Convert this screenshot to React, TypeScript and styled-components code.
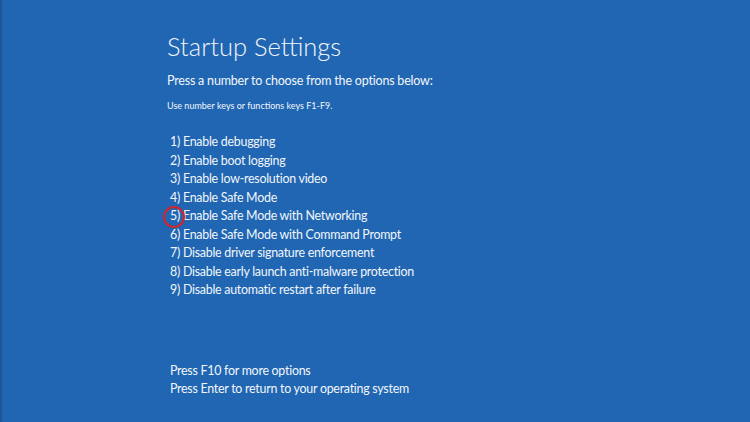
import React from 'react'
import styled, { createGlobalStyle } from 'styled-components'

const GlobalStyle = createGlobalStyle`
  html, body {
    margin: 0;
    padding: 0;
    background: #2166b2;
  }
`

const Screen = styled.div`
  width: 750px;
  height: 422px;
  box-sizing: border-box;
  background: #2166b2;
  border-left: 2px solid #1b5698;
  color: #f2f6fb;
  font-family: Lato, 'Open Sans', sans-serif;
  display: flex;
  flex-direction: column;
  padding: 30px 0 24px 165px;
  overflow: hidden;
`
const Title = styled.h1`
  margin: 0;
  font-size: 25.5px;
  font-weight: 300;
  line-height: 32px;
`
const Lead = styled.p`
  margin: 10px 0 0;
  font-size: 12.5px;
  letter-spacing: -0.2px;
  line-height: 18px;
`
const Hint = styled.p`
  margin: 10px 0 0;
  font-size: 9px;
  line-height: 12px;
`
const Options = styled.ol`
  list-style: none;
  margin: 21px 0 0;
  padding: 0 0 0 3px;
`
const Option = styled.li`
  position: relative;
  font-size: 12.4px;
  letter-spacing: -0.25px;
  line-height: 18.5px;
`
const Marker = styled.span`
  position: absolute;
  left: -7px;
  top: -1.5px;
  box-sizing: border-box;
  width: 22px;
  height: 22px;
  border: 2.5px solid #d3232e;
  border-radius: 50%;
`
const Footer = styled.div`
  margin-top: auto;
  padding-left: 3px;
  font-size: 12.4px;
  letter-spacing: -0.25px;
  line-height: 18px;
`

const options = [
  'Enable debugging',
  'Enable boot logging',
  'Enable low-resolution video',
  'Enable Safe Mode',
  'Enable Safe Mode with Networking',
  'Enable Safe Mode with Command Prompt',
  'Disable driver signature enforcement',
  'Disable early launch anti-malware protection',
  'Disable automatic restart after failure'
]

const App: React.FC = () => (
  <>
    <GlobalStyle />
    <Screen>
      <Title>Startup Settings</Title>
      <Lead>Press a number to choose from the options below:</Lead>
      <Hint>Use number keys or functions keys F1-F9.</Hint>
      <Options>
        {options.map((label, i) => (
          <Option key={label}>
            {i === 4 && <Marker />}
            {i + 1}) {label}
          </Option>
        ))}
      </Options>
      <Footer>
        <div>Press F10 for more options</div>
        <div>Press Enter to return to your operating system</div>
      </Footer>
    </Screen>
  </>
)

export default App
